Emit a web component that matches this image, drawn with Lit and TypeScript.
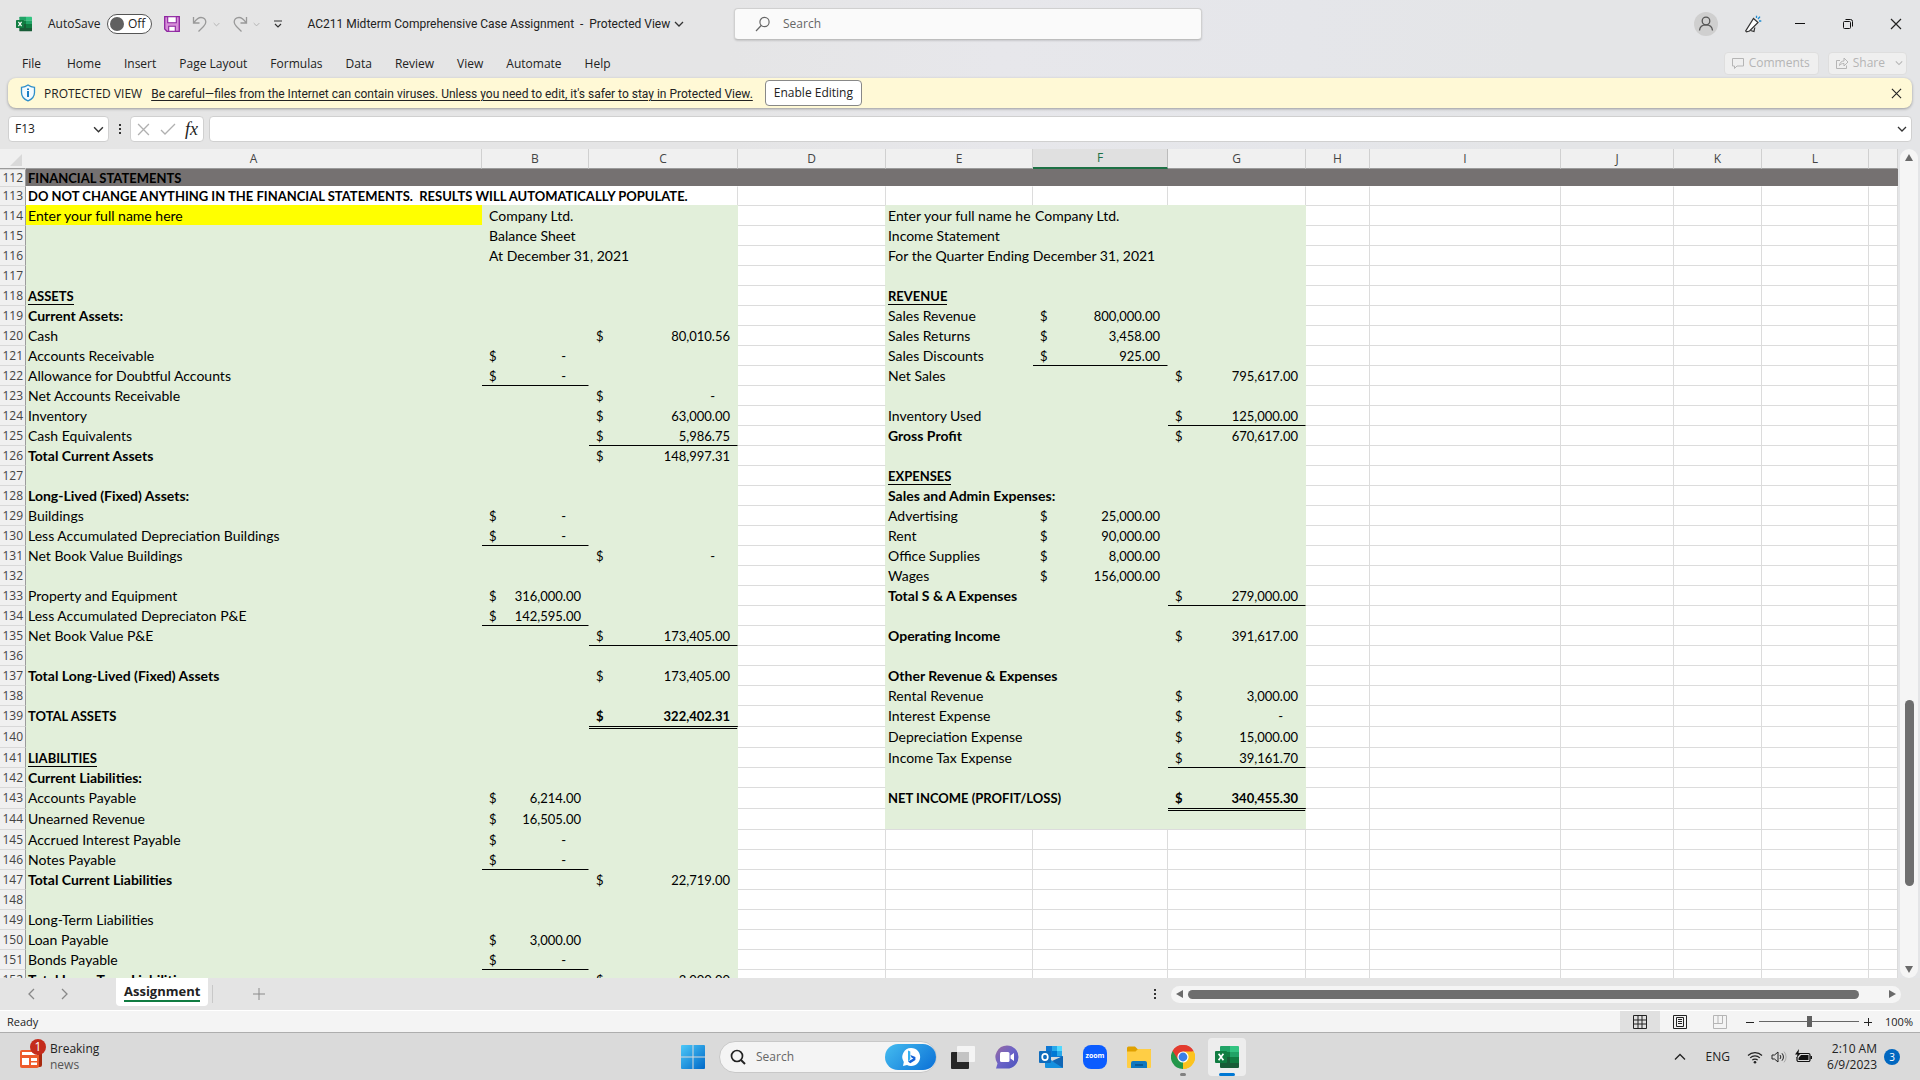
import { LitElement, html, css, svg, nothing } from "lit";
import type { TemplateResult } from "lit";
import { customElement, state } from "lit/decorators.js";
import { classMap } from "lit/directives/class-map.js";

/* ---------- Icons ---------- */

const excelIcon = (size: number) => html`
  <svg width=${size} height=${size} viewBox="0 0 24 24" aria-hidden="true">
    <path d="M6 1h9v6H5V2a1 1 0 0 1 1-1z" fill="#21a366" />
    <path d="M15 1h8a1 1 0 0 1 1 1v5h-9z" fill="#33c481" />
    <path d="M5 7h10v5H5z" fill="#107c41" />
    <path d="M15 7h9v5h-9z" fill="#21a366" />
    <path d="M5 12h10v6H5z" fill="#185c37" />
    <path d="M15 12h9v6h-9z" fill="#107c41" />
    <path d="M5 18h19v4a1 1 0 0 1-1 1H6a1 1 0 0 1-1-1z" fill="#185c37" />
    <rect x="0" y="6" width="12" height="12" rx="1" fill="#107c41" />
    <path d="M3.6 8.7l4.8 6.6M8.4 8.7l-4.8 6.6" stroke="#fff" stroke-width="1.7" />
  </svg>
`;

const chevronDown = (w = 10, color = "#333") => html`
  <svg width=${w} height=${w} viewBox="0 0 10 10" aria-hidden="true">
    <path d="M1 3l4 4 4-4" fill="none" stroke=${color} stroke-width="1.3" />
  </svg>
`;

const crossIcon = (size = 12, color = "#222") => html`
  <svg width=${size} height=${size} viewBox="0 0 12 12" aria-hidden="true">
    <path d="M1 1l10 10M11 1L1 11" fill="none" stroke=${color} stroke-width="1.2" />
  </svg>
`;

const saveIcon = html`
  <svg width="16" height="16" viewBox="0 0 16 16" aria-hidden="true">
    <path d="M.7.7h14.6v14.6H3L.7 13z" fill="#d68fd8" stroke="#8e24a0" stroke-width="1.3" />
    <path d="M3.7.7h8.6v6H3.7z" fill="#fff" stroke="#8e24a0" stroke-width="1.1" />
    <path d="M4.7 15.3v-5h6.6v5z" fill="#fff" stroke="#8e24a0" stroke-width="1.1" />
  </svg>
`;

const undoPath = svg`<path d="M1.5 1v6h6M1.8 6.8C4 3.6 6.200 1.500 9 1.500c3 0 4.800 2 4.800 4.500 0 2-1 3.200-2.300 4.500L6.500 15.500" fill="none" stroke="#999" stroke-width="1.300" />`;

const undoIcon = html`<svg width="16" height="16" viewBox="0 0 16 16" aria-hidden="true">${undoPath}</svg>`;
const redoIcon = html`
  <svg width="16" height="16" viewBox="0 0 16 16" aria-hidden="true">
    <g transform="matrix(-1 0 0 1 16 0)">${undoPath}</g>
  </svg>
`;

const customizeIcon = html`
  <svg width="8" height="8" viewBox="0 0 8 8" aria-hidden="true">
    <path d="M0 1h8M1 4l3 3 3-3" fill="none" stroke="#333" stroke-width="1.200" />
  </svg>
`;

const searchIcon = html`
  <svg width="16" height="16" viewBox="0 0 16 16" aria-hidden="true">
    <circle cx="9.500" cy="6" r="4.600" fill="none" stroke="#666" stroke-width="1.200" />
    <path d="M6.200 9.500L1 15" stroke="#666" stroke-width="1.200" />
  </svg>
`;

const personIcon = html`
  <svg width="24" height="24" viewBox="0 0 24 24" aria-hidden="true">
    <circle cx="12" cy="12" r="12" fill="#cfcfcf" />
    <circle cx="12" cy="9" r="3.800" fill="none" stroke="#555" stroke-width="1.300" />
    <path d="M5.500 18.500c.3-3.500 3-5.700 6.500-5.700s6.200 2.200 6.500 5.700" fill="none" stroke="#555" stroke-width="1.300" />
  </svg>
`;

const penIcon = html`
  <svg width="18" height="18" viewBox="0 0 18 18" aria-hidden="true">
    <path d="M9.500 3.500l4.500 4L5.500 16l-3 .8-.8-.8z" fill="#fff" stroke="#333" stroke-width="1.200" />
    <path d="M6.500 15.500l3.500 1 .8-4" fill="none" stroke="#333" stroke-width="1.200" />
    <path d="M12.500 3V.8M14 4l2-2.400M15 6h2.300" fill="none" stroke="#1e8bd0" stroke-width="1.300" />
  </svg>
`;

const minimizeIcon = html`
  <svg width="12" height="12" viewBox="0 0 12 12" aria-hidden="true">
    <path d="M1 5.500h10" stroke="#111" stroke-width="1" />
  </svg>
`;

const restoreIcon = html`
  <svg width="12" height="12" viewBox="0 0 12 12" aria-hidden="true">
    <rect x="1.500" y="3.500" width="7" height="7" rx="1" fill="none" stroke="#111" />
    <path d="M3.500 1.500h5a2 2 0 0 1 2 2v5" fill="none" stroke="#111" />
  </svg>
`;

const commentIcon = html`
  <svg width="14" height="14" viewBox="0 0 14 14" aria-hidden="true">
    <path d="M1.500 2.500h11v7.500H6L3.500 12.500V10h-2z" fill="none" stroke="#b5b5b5" />
  </svg>
`;

const shareIcon = html`
  <svg width="14" height="14" viewBox="0 0 14 14" aria-hidden="true">
    <path d="M5 4.500H1.500v8h10V9.500" fill="none" stroke="#b5b5b5" />
    <path d="M4.500 9.500c.3-3 2-4.500 4.500-4.500v-3l4 4-4 4V7.500c-2 0-3.500.5-4.500 2z" fill="none" stroke="#b5b5b5" />
  </svg>
`;

const shieldIcon = html`
  <svg width="16" height="18" viewBox="0 0 16 18" aria-hidden="true">
    <path d="M8 1c2 1.500 4.300 2.200 6.500 2.300V8.500c0 4-2.500 6.800-6.500 8.300-4-1.500-6.500-4.300-6.500-8.300V3.300C3.700 3.200 6 2.500 8 1z" fill="#f4fbff" stroke="#2f8fc9" stroke-width="1.300" />
    <path d="M7 7h2v6H7zM7 4.400h2v1.700H7z" fill="#1a7fc4" />
  </svg>
`;

const checkIcon = html`
  <svg width="16" height="12" viewBox="0 0 16 12" aria-hidden="true">
    <path d="M1 7l4 4L15 1" fill="none" stroke="#b0b0b0" stroke-width="1.300" />
  </svg>
`;

const dotsIcon = html`
  <svg width="4" height="12" viewBox="0 0 4 12" aria-hidden="true">
    <path d="M1 1h2v2H1zM1 5h2v2H1zM1 9h2v2H1z" fill="#333" />
  </svg>
`;

const triangle = (d: string) => html`
  <svg width="10" height="10" viewBox="0 0 10 10" aria-hidden="true">
    <path d=${d} fill="#6a6a6a" />
  </svg>
`;

const normalViewIcon = html`
  <svg width="14" height="14" viewBox="0 0 14 14" aria-hidden="true">
    <path d="M.5.5h13v13H.5zM5 .5v13M9 .5v13M.5 5h13M.5 9h13" fill="none" stroke="#222" />
  </svg>
`;

const pageLayoutIcon = html`
  <svg width="14" height="14" viewBox="0 0 14 14" aria-hidden="true">
    <path d="M.5.5h13v13H.5zM3.500 2.500h7v9h-7zM5 4.500h4M5 6.500h4M5 8.500h4" fill="none" stroke="#222" />
  </svg>
`;

const pageBreakIcon = html`
  <svg width="14" height="14" viewBox="0 0 14 14" aria-hidden="true">
    <path d="M.5.5h13v13H.5zM.5 8.500h9v-8M5 .5v8" fill="none" stroke="#b5b5b5" />
  </svg>
`;

const newsIcon = html`
  <svg width="22" height="18" viewBox="0 0 22 18" aria-hidden="true">
    <rect x="3" y="1" width="19" height="16" rx="2" fill="#a82a10" />
    <rect x="0" y="0" width="19" height="18" rx="2" fill="#ee5a2b" />
    <path d="M2 2h15v3H2zM2 8h7v7H2zM11 8h6v3h-6zM11 12.500h6V15h-6z" fill="#fff" />
  </svg>
`;

const startIcon = html`
  <svg width="24" height="24" viewBox="0 0 24 24" aria-hidden="true">
    <defs>
      <linearGradient id="win" x1="0" y1="0" x2="1" y2="1">
        <stop offset="0" stop-color="#4cc8f8" />
        <stop offset="1" stop-color="#0068c8" />
      </linearGradient>
    </defs>
    <path d="M0 1a1 1 0 0 1 1-1h10.500v11.500H0zM12.500 0H23a1 1 0 0 1 1 1v10.500H12.500zM0 12.500h11.500V24H1a1 1 0 0 1-1-1zM12.500 12.500H24V23a1 1 0 0 1-1 1H12.500z" fill="url(#win)" />
  </svg>
`;

const taskSearchIcon = html`
  <svg width="16" height="16" viewBox="0 0 16 16" aria-hidden="true">
    <circle cx="7" cy="7" r="5.500" fill="none" stroke="#222" stroke-width="1.700" />
    <path d="M11 11l4 4" stroke="#222" stroke-width="1.900" />
  </svg>
`;

const bingIcon = html`
  <svg width="20" height="20" viewBox="0 0 20 20" aria-hidden="true">
    <path d="M10 1a9 9 0 1 1-4 17l-4 1 .8-4A9 9 0 0 1 10 1z" fill="#fff" />
    <path d="M7 3.500l2.300 1v7.700l-2.300 2.300z" fill="#35b1f0" />
    <path d="M7 14.500l5.300-3-1.800-.9-1.100-2.500 5 1.900v3L9.300 16.300z" fill="#1663d8" />
  </svg>
`;

const taskViewIcon = html`
  <svg width="24" height="24" viewBox="0 0 24 24" aria-hidden="true">
    <rect x="0" y="7" width="18" height="17" rx="1" fill="#262626" />
    <rect x="6" y="1" width="18" height="16" rx="1" fill="#f4f4f4" />
    <rect x="6" y="7" width="12" height="10" fill="#c4c4c4" />
  </svg>
`;

const chatIcon = html`
  <svg width="24" height="24" viewBox="0 0 24 24" aria-hidden="true">
    <defs>
      <linearGradient id="chat" x1="0" y1="0" x2="1" y2="1">
        <stop offset="0" stop-color="#9b6a9e" />
        <stop offset=".5" stop-color="#6a63c8" />
        <stop offset="1" stop-color="#4b53bc" />
      </linearGradient>
    </defs>
    <path d="M12 .5a11.500 11.500 0 1 1 0 23H1l1.500-5A11.500 11.500 0 0 1 12 .5z" fill="url(#chat)" />
    <rect x="5" y="7" width="9.500" height="10" rx="1.500" fill="#fff" />
    <path d="M15.500 10.500L19 8v8l-3.500-2.500z" fill="#fff" />
  </svg>
`;

const outlookIcon = html`
  <svg width="24" height="24" viewBox="0 0 24 24" aria-hidden="true">
    <path d="M7 1h16v11H7z" fill="#0f78d4" />
    <path d="M13 1h5v5h-5z" fill="#28a8ea" />
    <path d="M18 1h5v5h-5z" fill="#50d9ff" />
    <path d="M13 6h5v5h-5z" fill="#0078d4" />
    <path d="M18 6h5v5h-5z" fill="#28a8ea" />
    <path d="M6 11l9 6 9-6v11a1 1 0 0 1-1 1H7a1 1 0 0 1-1-1z" fill="#1490df" />
    <path d="M24 11v12L13 16z" fill="#1066b5" />
    <rect x="0" y="6" width="12" height="12" rx="1" fill="#0f6cbd" />
    <ellipse cx="6" cy="12" rx="2.800" ry="3.200" fill="none" stroke="#fff" stroke-width="1.700" />
  </svg>
`;

const folderIcon = html`
  <svg width="24" height="24" viewBox="0 0 24 24" aria-hidden="true">
    <path d="M0 3a1.500 1.500 0 0 1 1.500-1.500H8L10.500 4H23a1 1 0 0 1 1 1v6H0z" fill="#e0a100" />
    <path d="M0 6.500h8.500L11 4h12a1 1 0 0 1 1 1v17a1 1 0 0 1-1 1H1a1 1 0 0 1-1-1z" fill="#ffce45" />
    <path d="M4 23v-5a2 2 0 0 1 2-2h12a2 2 0 0 1 2 2v5z" fill="#0f78c0" />
    <path d="M8 20h8" stroke="#0a4f86" stroke-width="1.500" />
  </svg>
`;

const chromeIcon = html`
  <svg width="24" height="24" viewBox="0 0 24 24" aria-hidden="true">
    <path d="M12 12L1.600 6A12 12 0 0 1 22.400 6z" fill="#e33b2e" />
    <path d="M12 12L22.400 6A12 12 0 0 1 12 24z" fill="#fcc31e" />
    <path d="M12 12L12 24A12 12 0 0 1 1.600 6z" fill="#23974a" />
    <path d="M12 6.500h10.700A12 12 0 0 0 1.600 6l5.600 8.700z" fill="#e33b2e" />
    <path d="M16.800 14.700L12 24A12 12 0 0 0 22.700 6.500H12z" fill="#fcc31e" />
    <circle cx="12" cy="12" r="5.600" fill="#fff" />
    <circle cx="12" cy="12" r="4.400" fill="#3b7fe8" />
  </svg>
`;

const wifiIcon = html`
  <svg width="16" height="16" viewBox="0 0 16 16" aria-hidden="true">
    <path d="M1 6.500a10 10 0 0 1 14 0M3.200 8.900a6.800 6.800 0 0 1 9.600 0M5.300 11.200a3.800 3.800 0 0 1 5.400 0" fill="none" stroke="#222" stroke-width="1.200" />
    <circle cx="8" cy="13.300" r="1.300" fill="#222" />
  </svg>
`;

const volumeIcon = html`
  <svg width="16" height="16" viewBox="0 0 16 16" aria-hidden="true">
    <path d="M1 6h2.500L7 3v10L3.500 10H1z" fill="none" stroke="#222" />
    <path d="M9 6a3 3 0 0 1 0 4M11 4.300a5.500 5.500 0 0 1 0 7.400" fill="none" stroke="#222" />
    <path d="M13 2.600a8 8 0 0 1 0 10.800" fill="none" stroke="#aaa" />
  </svg>
`;

const batteryIcon = html`
  <svg width="17" height="16" viewBox="0 0 17 16" aria-hidden="true">
    <path d="M5 4.500h8.500a1.500 1.500 0 0 1 1.500 1.500v5a1.500 1.500 0 0 1-1.500 1.500h-10A1.500 1.500 0 0 1 2 11V8" fill="none" stroke="#111" stroke-width="1.200" />
    <path d="M6 6h7.500v5h-10V9z" fill="#111" />
    <path d="M15.500 7H17v3h-1.500z" fill="#111" />
    <path d="M4 0L0 5.500h2.500L1.500 9 6 4H3.500z" fill="#111" />
  </svg>
`;

/* ---------- Sheet data ---------- */

interface Column {
  id: string;
  width?: number;
}

const COLUMNS: Column[] = [
  { id: "A", width: 456 },
  { id: "B", width: 107 },
  { id: "C", width: 149 },
  { id: "D", width: 148 },
  { id: "E", width: 147 },
  { id: "F", width: 135 },
  { id: "G", width: 138 },
  { id: "H", width: 64 },
  { id: "I", width: 191 },
  { id: "J", width: 113 },
  { id: "K", width: 88 },
  { id: "L", width: 107 },
  { id: "" },
];

const SELECTED_COLUMN = "F";
const FIRST_ROW = 112;
const LAST_ROW = 152;
const INCOME_LAST_ROW = 144;
const TALL_ROWS = [139, 140, 143, 144];

type Style = "b" | "u" | "caps" | "indent" | "yellow";

interface Cell {
  text?: string;
  amount?: string;
  styles?: Style[];
}

const t = (text: string, ...styles: Style[]): Cell => ({ text, styles });
const m = (amount: string, ...styles: Style[]): Cell => ({ amount, styles });

const CELLS: Record<string, Cell> = {
  A112: t("FINANCIAL STATEMENTS", "b", "caps"),
  A113: t("DO NOT CHANGE ANYTHING IN THE FINANCIAL STATEMENTS.  RESULTS WILL AUTOMATICALLY POPULATE.", "b", "caps"),
  A114: t("Enter your full name here", "yellow"),
  B114: t("Company Ltd.", "indent"),
  B115: t("Balance Sheet", "indent"),
  B116: t("At December 31, 2021", "indent"),
  A118: t("ASSETS", "b", "caps", "u"),
  A119: t("Current Assets:", "b"),
  A120: t("Cash"),
  C120: m("80,010.56"),
  A121: t("Accounts Receivable"),
  B121: m("-"),
  A122: t("Allowance for Doubtful Accounts"),
  B122: m("-"),
  A123: t("Net Accounts Receivable"),
  C123: m("-"),
  A124: t("Inventory"),
  C124: m("63,000.00"),
  A125: t("Cash Equivalents"),
  C125: m("5,986.75"),
  A126: t("Total Current Assets", "b"),
  C126: m("148,997.31"),
  A128: t("Long-Lived (Fixed) Assets:", "b"),
  A129: t("Buildings"),
  B129: m("-"),
  A130: t("Less Accumulated Depreciation Buildings"),
  B130: m("-"),
  A131: t("Net Book Value Buildings"),
  C131: m("-"),
  A133: t("Property and Equipment"),
  B133: m("316,000.00"),
  A134: t("Less Accumulated Depreciaton P&E"),
  B134: m("142,595.00"),
  A135: t("Net Book Value P&E"),
  C135: m("173,405.00"),
  A137: t("Total Long-Lived (Fixed) Assets", "b"),
  C137: m("173,405.00"),
  A139: t("TOTAL ASSETS", "b", "caps"),
  C139: m("322,402.31", "b"),
  A141: t("LIABILITIES", "b", "caps", "u"),
  A142: t("Current Liabilities:", "b"),
  A143: t("Accounts Payable"),
  B143: m("6,214.00"),
  A144: t("Unearned Revenue"),
  B144: m("16,505.00"),
  A145: t("Accrued Interest Payable"),
  B145: m("-"),
  A146: t("Notes Payable"),
  B146: m("-"),
  A147: t("Total Current Liabilities", "b"),
  C147: m("22,719.00"),
  A149: t("Long-Term Liabilities"),
  A150: t("Loan Payable"),
  B150: m("3,000.00"),
  A151: t("Bonds Payable"),
  B151: m("-"),
  A152: t("Total Long-Term Liabilities", "b"),
  C152: m("3,000.00"),

  E114: t("Enter your full name he"),
  F114: t("Company Ltd."),
  E115: t("Income Statement"),
  E116: t("For the Quarter Ending December 31, 2021"),
  E118: t("REVENUE", "b", "caps", "u"),
  E119: t("Sales Revenue"),
  F119: m("800,000.00"),
  E120: t("Sales Returns"),
  F120: m("3,458.00"),
  E121: t("Sales Discounts"),
  F121: m("925.00"),
  E122: t("Net Sales"),
  G122: m("795,617.00"),
  E124: t("Inventory Used"),
  G124: m("125,000.00"),
  E125: t("Gross Profit", "b"),
  G125: m("670,617.00"),
  E127: t("EXPENSES", "b", "caps", "u"),
  E128: t("Sales and Admin Expenses:", "b"),
  E129: t("Advertising"),
  F129: m("25,000.00"),
  E130: t("Rent"),
  F130: m("90,000.00"),
  E131: t("Office Supplies"),
  F131: m("8,000.00"),
  E132: t("Wages"),
  F132: m("156,000.00"),
  E133: t("Total S & A Expenses", "b"),
  G133: m("279,000.00"),
  E135: t("Operating Income", "b"),
  G135: m("391,617.00"),
  E137: t("Other Revenue & Expenses", "b"),
  E138: t("Rental Revenue"),
  G138: m("3,000.00"),
  E139: t("Interest Expense"),
  G139: m("-"),
  E140: t("Depreciation Expense"),
  G140: m("15,000.00"),
  E141: t("Income Tax Expense"),
  G141: m("39,161.70"),
  E143: t("NET INCOME (PROFIT/LOSS)", "b", "caps"),
  G143: m("340,455.30", "b"),
};

/* Rules are drawn on the top edge of the cell below the amount. */
const SINGLE_RULE = new Set(["B123", "C126", "B131", "B135", "C136", "B147", "B152", "F122", "G125", "G134", "G142"]);
const DOUBLE_RULE = new Set(["C140", "G144"]);

@customElement("sheet-grid")
export class SheetGrid extends LitElement {
  static styles = css`
    :host {
      display: block;
      flex: 1;
      min-width: 0;
      overflow: hidden;
      background: #fff;
    }
    table {
      width: 100%;
      table-layout: fixed;
      border-collapse: separate;
      border-spacing: 0;
      font-family: Lato, "Liberation Sans", sans-serif;
      font-size: 14px;
      color: #000;
    }
    .rowhead-col {
      width: 26px;
    }
    th,
    td {
      box-sizing: border-box;
      height: 20px;
      padding: 0;
      font-weight: 400;
      line-height: 18px;
      white-space: nowrap;
    }
    td span {
      white-space: pre;
    }
    thead th {
      border-right: 1px solid #d0d0d0;
      border-bottom: 1px solid #9b9b9b;
      background: #f0f0f0;
      color: #444;
      font-family: "Open Sans", "Noto Sans", sans-serif;
      font-size: 12px;
    }
    thead .corner {
      border-right-color: #f0f0f0;
      text-align: right;
    }
    .corner svg {
      display: block;
      margin: 2px 3px 0 auto;
    }
    thead .selected {
      border-right-color: #bbb;
      border-bottom: 2px solid #1e7145;
      background: #e0e0e0;
      color: #1e7145;
    }
    tbody th {
      border-top: 1px solid #d8d8d8;
      border-right: 1px solid #9b9b9b;
      background: #f0f0f0;
      color: #444;
      font-family: "Open Sans", "Noto Sans", sans-serif;
      font-size: 12px;
      text-align: right;
      padding-right: 2px;
    }
    td {
      padding-left: 2px;
      border-top: 1px solid #dcdcdc;
      border-right: 1px solid #dcdcdc;
    }
    .tall th,
    .tall td {
      height: 21px;
    }
    .band th,
    .band td {
      height: 17px;
      line-height: 16px;
    }
    .band td {
      border-color: #757171;
      background: #757171;
    }
    .notice th,
    .notice td {
      height: 19px;
    }
    .notice td {
      border-top-color: #fff;
    }
    .notice .open {
      border-right-color: #fff;
    }
    .green {
      border-color: #e2efda;
      background: #e2efda;
    }
    .before-green {
      border-right-color: #e2efda;
    }
    .yellow {
      border-color: #ff0;
      background: #ff0;
    }
    .b {
      font-weight: 700;
    }
    .caps {
      font-size: 13px;
    }
    .u span {
      border-bottom: 1px solid #000;
      line-height: 16px;
      display: inline-block;
    }
    .indent {
      padding-left: 7px;
    }
    .rule {
      border-top: 1px solid #000;
    }
    .double-rule {
      border-top: 3px double #000;
    }
    .money {
      display: flex;
      justify-content: space-between;
      padding: 0 7px 0 5px;
      font-size: 13px;
    }
    .money .nil {
      padding-right: 15px;
    }
  `;

  private renderCell(column: Column, row: number) {
    const key = `${column.id}${row}`;
    const cell = CELLS[key];
    const inBalance = row >= 114 && "ABC".includes(column.id) && column.id !== "";
    const inIncome = row >= 114 && row <= INCOME_LAST_ROW && "EFG".includes(column.id) && column.id !== "";
    const classes: Record<string, boolean> = {
      green: inBalance || inIncome,
      "before-green": column.id === "D" && row >= 114 && row <= INCOME_LAST_ROW,
      open: column.id === "A" || column.id === "B",
      rule: SINGLE_RULE.has(key),
      "double-rule": DOUBLE_RULE.has(key),
    };
    for (const style of cell?.styles ?? []) classes[style] = true;
    const content = cell?.amount
      ? html`<div class="money"><span>$</span><span class=${cell.amount === "-" ? "nil" : "value"}>${cell.amount}</span></div>`
      : cell?.text
        ? html`<span>${cell.text}</span>`
        : nothing;
    return html`<td class=${classMap(classes)}>${content}</td>`;
  }

  render() {
    const rows = Array.from({ length: LAST_ROW - FIRST_ROW + 1 }, (_, i) => FIRST_ROW + i);
    return html`
      <table aria-label="Assignment">
        <colgroup>
          <col class="rowhead-col" />
          ${COLUMNS.map((c) => (c.width ? html`<col style="width:${c.width}px" />` : html`<col />`))}
        </colgroup>
        <thead>
          <tr>
            <th class="corner">
              <svg width="12" height="12" viewBox="0 0 12 12" aria-hidden="true"><path d="M12 0v12H0z" fill="#d9d9d9" /></svg>
            </th>
            ${COLUMNS.map((c) => html`<th scope="col" class=${classMap({ selected: c.id === SELECTED_COLUMN })}>${c.id}</th>`)}
          </tr>
        </thead>
        <tbody>
          ${rows.map(
            (row) => html`
              <tr class=${classMap({ band: row === 112, notice: row === 113, tall: TALL_ROWS.includes(row) })}>
                <th scope="row">${row}</th>
                ${COLUMNS.map((c) => this.renderCell(c, row))}
              </tr>
            `,
          )}
        </tbody>
      </table>
    `;
  }
}

/* ---------- Application window ---------- */

const MENUS = ["File", "Home", "Insert", "Page Layout", "Formulas", "Data", "Review", "View", "Automate", "Help"];

const PINNED: { name: string; icon: TemplateResult; state?: "running" | "active" }[] = [
  { name: "Task View", icon: taskViewIcon },
  { name: "Chat", icon: chatIcon },
  { name: "Outlook", icon: outlookIcon },
  { name: "Zoom", icon: html`<span class="zoom-logo">zoom</span>` },
  { name: "File Explorer", icon: folderIcon },
  { name: "Chrome", icon: chromeIcon, state: "running" },
  { name: "Excel", icon: excelIcon(24), state: "active" },
];

@customElement("app-root")
export class AppRoot extends LitElement {
  @state() private zoomLevel = 100;

  static styles = css`
    :host {
      display: flex;
      flex-direction: column;
      height: 100vh;
      overflow: hidden;
      background: linear-gradient(90deg, #e5e5e5 0%, #e5e5e6 38%, #e7e7eb 52%, #e5e6ea 68%, #e4e5e7 80%);
      color: #222;
      font-family: "Open Sans", "Noto Sans", sans-serif;
      font-size: 12px;
      line-height: 16px;
    }
    button,
    input {
      margin: 0;
      padding: 0;
      border: 0;
      background: none;
      color: inherit;
      font: inherit;
    }
    svg {
      display: block;
      flex: none;
    }
    .icon-btn {
      display: flex;
      align-items: center;
      justify-content: center;
    }

    .title-bar {
      display: grid;
      grid-template-columns: 734fr 468fr 718fr;
      align-items: center;
      height: 48px;
    }
    .quick {
      display: flex;
      align-items: center;
      padding-left: 16px;
      white-space: nowrap;
    }
    .autosave {
      display: flex;
      align-items: center;
      gap: 7px;
      margin: 0 12px 0 16px;
    }
    .switch {
      position: relative;
      display: flex;
      align-items: center;
      justify-content: flex-end;
      box-sizing: border-box;
      width: 45px;
      height: 20px;
      padding-right: 6px;
      border: 1px solid #555;
      border-radius: 10px;
      background: #fff;
    }
    .switch input {
      position: absolute;
      inset: 0;
      opacity: 0;
    }
    .switch::before {
      content: "";
      width: 14px;
      height: 14px;
      margin-right: auto;
      margin-left: 2px;
      border-radius: 50%;
      background: #606060;
    }
    .history {
      display: flex;
      align-items: center;
      gap: 5px;
      margin-left: 12px;
    }
    .customize {
      margin: 0 25px 0 14px;
    }
    .doc-title {
      display: flex;
      align-items: center;
      gap: 4px;
      font-family: Roboto, "Open Sans", sans-serif;
    }
    .doc-title span {
      white-space: pre;
    }
    .search-box {
      display: flex;
      align-items: center;
      gap: 12px;
      box-sizing: border-box;
      height: 32px;
      padding: 0 20px;
      border: 1px solid #d0d0d0;
      border-bottom-color: #bdbdbd;
      border-radius: 4px;
      background: #fafafa;
      box-shadow: 0 1px 2px #0002;
    }
    .search-box input {
      flex: 1;
      min-width: 0;
    }
    input::placeholder {
      color: #666;
      opacity: 1;
    }
    .window-controls {
      display: flex;
      align-items: center;
      justify-content: flex-end;
      padding-right: 18px;
      gap: 36px;
    }
    .account {
      display: flex;
      gap: 26px;
      align-items: center;
      margin-right: -4px;
    }

    .menu-row {
      display: flex;
      align-items: center;
      justify-content: space-between;
      height: 30px;
      padding: 0 13px 0 11px;
    }
    .menus {
      display: flex;
      gap: 1px;
      padding-top: 2px;
    }
    .menus button {
      padding: 0 11px;
    }
    .menus button:first-child {
      margin-right: 3px;
    }
    .side-actions {
      display: flex;
      gap: 9px;
    }
    .ghost {
      display: flex;
      align-items: center;
      gap: 4px;
      box-sizing: border-box;
      height: 23px;
      padding: 0 8px 0 6px;
      border: 1px solid #dedede;
      border-radius: 4px;
      background: #efefef;
      color: #b5b5b5;
    }
    .ghost .split {
      margin-left: 6px;
    }
    .ghost.share {
      padding-right: 3px;
    }

    .protected {
      display: flex;
      align-items: center;
      height: 30px;
      margin: 0 8px;
      padding: 0 10px 0 12px;
      border-radius: 8px;
      background: #fff9d6;
      box-shadow: 0 1px 3px #0005;
    }
    .protected strong {
      margin: 0 9px 0 8px;
      padding-top: 2px;
      font-weight: 400;
    }
    .protected a {
      margin-right: 12px;
      padding-top: 2px;
      color: #222;
      font-family: Roboto, "Open Sans", sans-serif;
      text-underline-offset: 2px;
    }
    .enable {
      height: 26px;
      padding: 0 8px;
      border: 1px solid #888;
      border-radius: 4px;
      background: #fff;
    }
    .protected .dismiss {
      margin-left: auto;
    }

    .formula-row {
      display: flex;
      align-items: center;
      height: 26px;
      margin: 8px 8px 7px;
    }
    .field {
      display: flex;
      align-items: center;
      box-sizing: border-box;
      height: 26px;
      border: 1px solid #d0d0d0;
      border-radius: 4px;
      background: #fff;
    }
    .name-box {
      width: 101px;
      padding: 0 4px 0 6px;
    }
    .name-box input {
      flex: 1;
      min-width: 0;
    }
    .handle {
      margin: 0 8px 0 9px;
    }
    .fx {
      justify-content: space-between;
      width: 74px;
      padding: 0 5px 0 6px;
    }
    .fx-mark {
      font-family: "Liberation Serif", serif;
      font-size: 18px;
      font-style: italic;
    }
    .formula {
      flex: 1;
      margin-left: 5px;
      padding-right: 4px;
    }
    .formula input {
      flex: 1;
      min-width: 0;
    }

    .workspace {
      display: flex;
      flex: 1;
      min-height: 0;
    }
    .v-scroll {
      display: flex;
      flex-direction: column;
      align-items: center;
      box-sizing: border-box;
      width: 18px;
      margin: 0 2px;
      padding: 4px 0;
      border-radius: 9px;
      background: #f5f5f5;
    }
    .v-before {
      flex: 538;
    }
    .v-thumb {
      flex: 187;
      width: 9px;
      border-radius: 5px;
      background: #6e6e6e;
    }
    .v-after {
      flex: 78;
    }

    .tab-row {
      display: flex;
      align-items: center;
      height: 32px;
      padding-left: 26px;
      padding-right: 19px;
      background: #e4e4e4;
    }
    .tab-nav {
      display: flex;
      gap: 20px;
    }
    .sheet-tab {
      align-self: flex-start;
      height: 28px;
      margin-left: 46px;
      padding: 0 8px;
      border-radius: 0 0 4px 4px;
      background: #fff;
      font-size: 13px;
      font-weight: 700;
    }
    .sheet-tab span {
      display: block;
      padding-bottom: 1px;
      border-bottom: 2px solid #107c41;
    }
    .tab-divider {
      width: 1px;
      height: 18px;
      margin: 0 40px 0 4px;
      background: #c8c8c8;
    }
    .tab-dots {
      margin-left: auto;
      margin-right: 14px;
    }
    .h-scroll {
      display: flex;
      align-items: center;
      flex: 0 1 730px;
      box-sizing: border-box;
      height: 17px;
      padding: 0 4px;
      border-radius: 9px;
      background: #f5f5f5;
    }
    .h-thumb {
      flex: 672;
      height: 9px;
      margin-left: 3px;
      border-radius: 5px;
      background: #6e6e6e;
    }
    .h-after {
      flex: 28;
    }

    .status {
      display: flex;
      align-items: center;
      height: 21px;
      padding: 0 7px;
      border-top: 1px solid #fff;
      border-bottom: 1px solid #adadad;
      background: #f4f4f4;
      font-size: 11px;
    }
    .views {
      display: flex;
      margin-left: auto;
    }
    .views button {
      width: 40px;
      height: 21px;
    }
    .views .on {
      background: #e0e0e0;
    }
    .zoom {
      display: flex;
      align-items: center;
      gap: 5px;
      margin-left: 6px;
    }
    .zoom input {
      width: 100px;
      height: 16px;
      appearance: none;
      background: linear-gradient(#666, #666) center / 100% 1px no-repeat;
    }
    .zoom input::-webkit-slider-thumb {
      appearance: none;
      width: 5px;
      height: 11px;
      background: #606060;
    }
    .zoom output {
      width: 36px;
      text-align: right;
    }

    .taskbar {
      display: grid;
      grid-template-columns: 1fr auto 1fr;
      align-items: center;
      height: 47px;
      background: #dadada;
    }
    .widget {
      position: relative;
      display: flex;
      align-items: center;
      gap: 8px;
      margin-left: 20px;
      text-align: left;
      justify-self: start;
    }
    .widget svg {
      margin-top: 4px;
    }
    .widget .count {
      position: absolute;
      left: 10px;
      top: -2px;
      width: 16px;
      height: 16px;
      border-radius: 50%;
      background: #c42b1c;
      color: #fff;
      text-align: center;
    }
    .widget small {
      display: block;
      color: #555;
      font-size: 12px;
    }
    .apps {
      display: flex;
      align-items: center;
    }
    .app {
      position: relative;
      display: flex;
      align-items: center;
      justify-content: center;
      width: 44px;
      height: 38px;
    }
    .app.active {
      width: 38px;
      margin: 0 3px;
      border-radius: 4px;
      background: #ededed;
    }
    .app::after {
      position: absolute;
      bottom: 0;
      height: 3px;
      border-radius: 2px;
    }
    .app.running::after {
      content: "";
      width: 6px;
      background: #808080;
    }
    .app.active::after {
      content: "";
      width: 16px;
      background: #0078d4;
    }
    .zoom-logo {
      width: 24px;
      height: 24px;
      border-radius: 8px;
      background: #0b5cff;
      color: #fff;
      font-size: 7px;
      font-weight: 700;
      line-height: 22px;
      text-align: center;
    }
    .task-search {
      display: flex;
      align-items: center;
      gap: 10px;
      box-sizing: border-box;
      width: 218px;
      height: 32px;
      margin: 0 4px;
      padding: 0 0 0 10px;
      border: 1px solid #c8c8c8;
      border-radius: 16px;
      background: #f4f4f4;
    }
    .task-search input {
      flex: 1;
      min-width: 0;
    }
    .bing {
      display: flex;
      align-items: center;
      justify-content: center;
      width: 51px;
      height: 26px;
      border-radius: 13px;
      background: linear-gradient(135deg, #45bdf0, #0a6fd6);
    }
    .tray {
      display: flex;
      align-items: center;
      justify-content: flex-end;
      padding-right: 20px;
    }
    .lang {
      margin: 0 17px 0 20px;
    }
    .tray-icons {
      display: flex;
      gap: 8px;
    }
    .clock {
      margin: 0 7px 0 15px;
      text-align: right;
    }
    .alerts {
      width: 16px;
      height: 16px;
      border-radius: 50%;
      background: #0067c0;
      color: #fff;
      font-size: 10px;
      text-align: center;
    }
  `;

  private onZoom(event: Event) {
    this.zoomLevel = Number((event.target as HTMLInputElement).value);
  }

  private renderTop() {
    return html`
      <header class="title-bar">
        <div class="quick">
          ${excelIcon(16)}
          <label class="autosave">
            AutoSave
            <span class="switch"><input type="checkbox" role="switch" />Off</span>
          </label>
          <button class="icon-btn" aria-label="Save">${saveIcon}</button>
          <div class="history">
            <button class="icon-btn" aria-label="Undo">${undoIcon}</button>
            <button class="icon-btn" aria-label="Undo history">${chevronDown(7, "#b0b0b0")}</button>
          </div>
          <div class="history">
            <button class="icon-btn" aria-label="Redo">${redoIcon}</button>
            <button class="icon-btn" aria-label="Redo history">${chevronDown(7, "#b0b0b0")}</button>
          </div>
          <button class="icon-btn customize" aria-label="Customize toolbar">${customizeIcon}</button>
          <button class="doc-title"><span>AC211 Midterm Comprehensive Case Assignment  -  Protected View</span>${chevronDown(10)}</button>
        </div>
        <label class="search-box">${searchIcon}<input type="search" placeholder="Search" aria-label="Search" /></label>
        <div class="window-controls">
          <div class="account">
            <button class="icon-btn" aria-label="Account">${personIcon}</button>
            <button class="icon-btn" aria-label="What's new">${penIcon}</button>
          </div>
          <button class="icon-btn" aria-label="Minimize">${minimizeIcon}</button>
          <button class="icon-btn" aria-label="Restore">${restoreIcon}</button>
          <button class="icon-btn" aria-label="Close">${crossIcon(12)}</button>
        </div>
      </header>
      <div class="menu-row">
        <nav class="menus">${MENUS.map((name) => html`<button>${name}</button>`)}</nav>
        <div class="side-actions">
          <button class="ghost">${commentIcon}Comments</button>
          <button class="ghost share">${shareIcon}Share<span class="split">${chevronDown(8, "#b5b5b5")}</span></button>
        </div>
      </div>
      <section class="protected">
        ${shieldIcon}
        <strong>PROTECTED VIEW</strong>
        <a href="#protected-view">Be careful—files from the Internet can contain viruses. Unless you need to edit, it's safer to stay in Protected View.</a>
        <button class="enable">Enable Editing</button>
        <button class="icon-btn dismiss" aria-label="Dismiss">${crossIcon(11)}</button>
      </section>
      <div class="formula-row">
        <div class="field name-box">
          <input type="text" aria-label="Name box" .value=${"F13"} />
          <button class="icon-btn" aria-label="Name list">${chevronDown(11)}</button>
        </div>
        <span class="handle">${dotsIcon}</span>
        <div class="field fx">
          <button class="icon-btn" aria-label="Cancel">${crossIcon(13, "#b0b0b0")}</button>
          <button class="icon-btn" aria-label="Enter">${checkIcon}</button>
          <button class="fx-mark" aria-label="Insert function">fx</button>
        </div>
        <div class="field formula">
          <input type="text" aria-label="Formula" />
          <button class="icon-btn" aria-label="Expand formula bar">${chevronDown(10)}</button>
        </div>
      </div>
    `;
  }

  private renderBottom() {
    return html`
      <div class="tab-row">
        <div class="tab-nav">
          <button class="icon-btn" aria-label="Previous sheet">
            <svg width="12" height="12" viewBox="0 0 12 12" aria-hidden="true"><path d="M8 1L3 6l5 5" fill="none" stroke="#888" stroke-width="1.300" /></svg>
          </button>
          <button class="icon-btn" aria-label="Next sheet">
            <svg width="12" height="12" viewBox="0 0 12 12" aria-hidden="true"><path d="M4 1l5 5-5 5" fill="none" stroke="#888" stroke-width="1.300" /></svg>
          </button>
        </div>
        <button class="sheet-tab"><span>Assignment</span></button>
        <span class="tab-divider"></span>
        <button class="icon-btn" aria-label="New sheet">
          <svg width="12" height="12" viewBox="0 0 12 12" aria-hidden="true"><path d="M6 0v12M0 6h12" stroke="#8a8a8a" /></svg>
        </button>
        <span class="tab-dots">${dotsIcon}</span>
        <div class="h-scroll">
          ${triangle("M8 1v8L1 5z")}
          <span class="h-thumb"></span>
          <span class="h-after"></span>
          ${triangle("M2 1v8l7-4z")}
        </div>
      </div>
      <footer class="status">
        <span>Ready</span>
        <div class="views">
          <button class="icon-btn on" aria-label="Normal view">${normalViewIcon}</button>
          <button class="icon-btn" aria-label="Page layout view">${pageLayoutIcon}</button>
          <button class="icon-btn" aria-label="Page break preview">${pageBreakIcon}</button>
        </div>
        <div class="zoom">
          <button class="icon-btn" aria-label="Zoom out">
            <svg width="8" height="8" viewBox="0 0 8 8" aria-hidden="true"><path d="M0 4.500h8" stroke="#222" /></svg>
          </button>
          <input type="range" min="0" max="200" aria-label="Zoom" .value=${String(this.zoomLevel)} @input=${this.onZoom} />
          <button class="icon-btn" aria-label="Zoom in">
            <svg width="8" height="8" viewBox="0 0 8 8" aria-hidden="true"><path d="M0 4.500h8M4.500 0v8" stroke="#222" /></svg>
          </button>
          <output>${this.zoomLevel}%</output>
        </div>
      </footer>
    `;
  }

  private renderTaskbar() {
    return html`
      <div class="taskbar">
        <button class="widget">
          ${newsIcon}
          <span class="count">1</span>
          <span>Breaking<small>news</small></span>
        </button>
        <div class="apps">
          <button class="app" aria-label="Start">${startIcon}</button>
          <label class="task-search">
            ${taskSearchIcon}<input type="search" placeholder="Search" aria-label="Search the taskbar" />
            <span class="bing">${bingIcon}</span>
          </label>
          ${PINNED.map(
            (app) => html`
              <button
                class=${classMap({ app: true, running: app.state === "running", active: app.state === "active" })}
                aria-label=${app.name}
              >
                ${app.icon}
              </button>
            `,
          )}
        </div>
        <div class="tray">
          <button class="icon-btn" aria-label="Hidden icons">
            <svg width="12" height="12" viewBox="0 0 12 12" aria-hidden="true"><path d="M1 8.500l5-5 5 5" fill="none" stroke="#222" stroke-width="1.300" /></svg>
          </button>
          <button class="lang">ENG</button>
          <button class="tray-icons" aria-label="Network, volume and battery">${wifiIcon}${volumeIcon}${batteryIcon}</button>
          <button class="clock">2:10 AM<br />6/9/2023</button>
          <button class="alerts">3</button>
        </div>
      </div>
    `;
  }

  render() {
    return html`
      ${this.renderTop()}
      <main class="workspace">
        <sheet-grid></sheet-grid>
        <div class="v-scroll">
          ${triangle("M1 8h8L5 1z")}
          <span class="v-before"></span>
          <span class="v-thumb"></span>
          <span class="v-after"></span>
          ${triangle("M1 2h8L5 9z")}
        </div>
      </main>
      ${this.renderBottom()} ${this.renderTaskbar()}
    `;
  }
}
